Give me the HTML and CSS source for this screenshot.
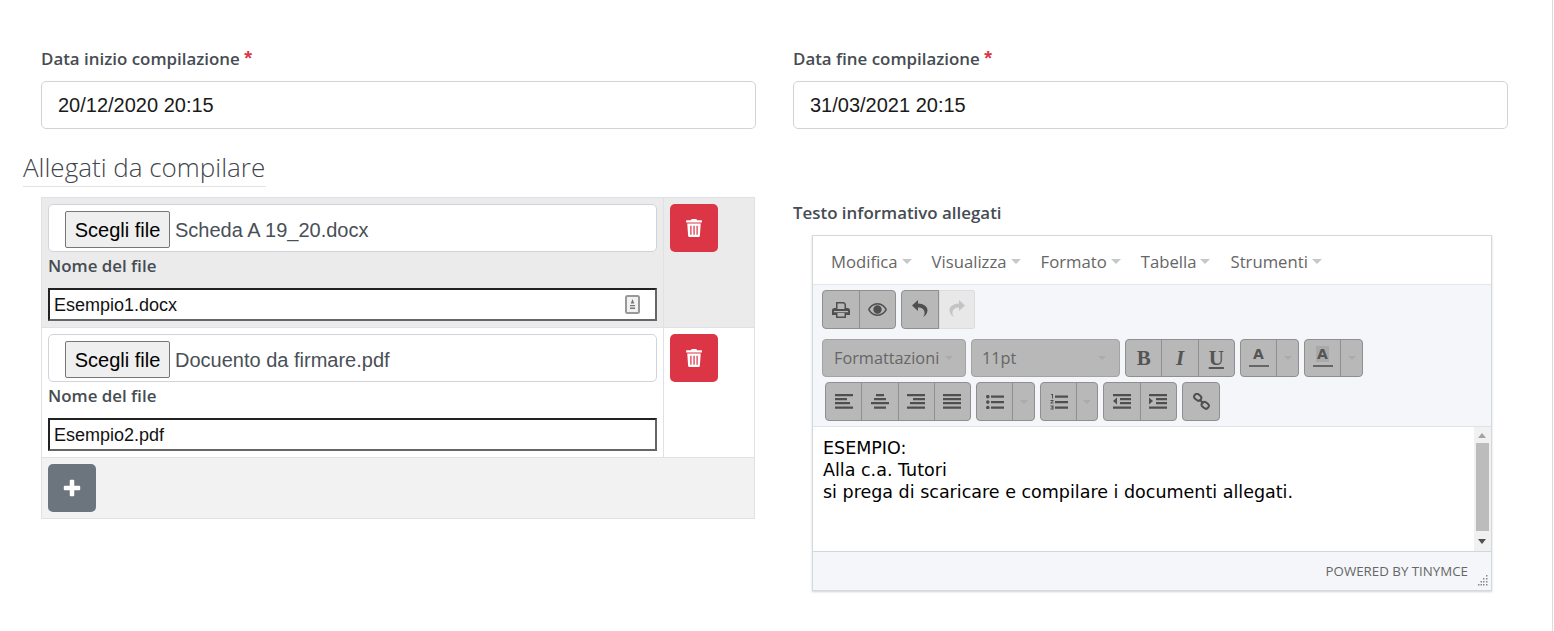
FILE: index.html
```html
<!DOCTYPE html>
<html lang="it">
<head>
<meta charset="utf-8">
<title>Allegati da compilare</title>
<link rel="stylesheet" href="styles.css">
</head>
<body>
<svg class="defs" width="0" height="0" aria-hidden="true">
  <symbol id="i-trash" viewBox="0 0 14 16"><path fill="currentColor" d="M5 0h4l.8 1.200H14V3H0V1.200h4.200zM1 4h12l-.8 11a1.200 1.200 0 0 1-1.200 1H3a1.200 1.200 0 0 1-1.200-1zm2.700 2v8h1.100V6zm2.800 0v8h1.100V6zm2.700 0v8h1.100V6z"/></symbol>
  <symbol id="i-caret" viewBox="0 0 10 5"><path fill="currentColor" d="M0 0h10L5 5z"/></symbol>
</svg>
<main class="page">
  <div class="grid">
    <div class="field">
      <label class="lbl">Data inizio compilazione <span class="req">*</span></label>
      <div class="date">20/12/2020 20:15</div>
    </div>
    <div class="field">
      <label class="lbl">Data fine compilazione <span class="req">*</span></label>
      <div class="date">31/03/2021 20:15</div>
    </div>
    <section class="left">
      <h2 class="heading">Allegati da compilare</h2>
      <div class="table">
        <div class="row row-a">
          <div class="cell-main">
            <div class="file"><button class="choose">Scegli file</button><span class="fname">Scheda A 19_20.docx</span></div>
            <div class="lbl lbl-name">Nome del file</div>
            <div class="name-input"><span>Esempio1.docx</span>
              <svg class="contact" width="15" height="19" viewBox="0 0 15 19"><rect x="1" y="1" width="13" height="17" rx="1.500" fill="#f2f2f2" stroke="#999" stroke-width="2"/><path d="M7.500 4l1.800 4.500H5.700zM5 10h5v1.200H5zM5 12.500h5v1.500H5z" fill="#777"/></svg>
            </div>
          </div>
          <div class="cell-act"><button class="btn-del"><svg width="16" height="18"><use href="#i-trash"/></svg></button></div>
        </div>
        <div class="row row-b">
          <div class="cell-main">
            <div class="file"><button class="choose">Scegli file</button><span class="fname">Docuento da firmare.pdf</span></div>
            <div class="lbl lbl-name">Nome del file</div>
            <div class="name-input"><span>Esempio2.pdf</span></div>
          </div>
          <div class="cell-act"><button class="btn-del"><svg width="16" height="18"><use href="#i-trash"/></svg></button></div>
        </div>
        <div class="row-add">
          <button class="btn-add"><svg width="18" height="18" viewBox="0 0 16 16"><path fill="#fff" d="M6 1.500a.8.8 0 0 1 .8-.8h2.400a.8.8 0 0 1 .8.8V6h4.500a.8.8 0 0 1 .8.8v2.400a.8.8 0 0 1-.8.8H10v4.500a.8.8 0 0 1-.8.8H6.800a.8.8 0 0 1-.8-.8V10H1.500a.8.8 0 0 1-.8-.8V6.800a.8.8 0 0 1 .8-.8H6z"/></svg></button>
        </div>
      </div>
    </section>
    <section class="right">
      <div class="lbl">Testo informativo allegati</div>
      <div class="editor">
        <nav class="menubar">
          <span class="menu">Modifica<svg class="caret" width="10" height="5"><use href="#i-caret"/></svg></span>
          <span class="menu">Visualizza<svg class="caret" width="10" height="5"><use href="#i-caret"/></svg></span>
          <span class="menu">Formato<svg class="caret" width="10" height="5"><use href="#i-caret"/></svg></span>
          <span class="menu">Tabella<svg class="caret" width="10" height="5"><use href="#i-caret"/></svg></span>
          <span class="menu">Strumenti<svg class="caret" width="10" height="5"><use href="#i-caret"/></svg></span>
        </nav>
        <div class="toolbar">
          <div class="tb-row tb-row1">
            <div class="tgroup w74">
              <span class="tb"><svg width="18" height="16" viewBox="0 0 18 16"><path fill="#4f4f4f" d="M4 0h8l2 2v4h1.500A2.500 2.500 0 0 1 18 8.500V13h-4v3H4v-3H0V8.500A2.500 2.500 0 0 1 2.500 6H4zm1.500 1.500V7h7V2.600l-1-1.100zM5.500 11v3.500h7V11zM2 9v1.200h14V9z"/></svg></span>
              <span class="tb"><svg width="19" height="13" viewBox="0 0 19 13"><path fill="#4f4f4f" d="M9.500 0C14 0 17.500 3 19 6.500 17.500 10 14 13 9.500 13S1.500 10 0 6.500C1.500 3 5 0 9.500 0zm0 1.500C6 1.500 3.200 3.700 1.700 6.500 3.200 9.300 6 11.500 9.500 11.500s6.300-2.200 7.800-5C15.800 3.700 13 1.500 9.500 1.500zm0 .8a4.200 4.200 0 1 1 0 8.400 4.200 4.200 0 0 1 0-8.400z"/></svg></span>
            </div>
            <div class="tgroup w74">
              <span class="tb"><svg class="undo" width="16" height="17" viewBox="0 0 16 17"><path fill="#4f4f4f" d="M6 0L0 5.500 6 11V7.500c4 0 6 2 6.500 4.500.3 2-.5 4-1.500 5 3-1.500 4.500-4.500 4.500-7C15.500 6.500 11.500 3.500 6 3.500z"/></svg></span>
              <span class="tb tb-off"><svg class="undo" width="16" height="17" viewBox="0 0 16 17"><path fill="#c4c4c4" d="M10 0l6 5.500L10 11V7.500c-4 0-6 2-6.500 4.500-.3 2 .5 4 1.500 5C2 15.500.5 12.500.5 10 .5 6.500 4.500 3.500 10 3.500z"/></svg></span>
            </div>
          </div>
          <div class="tb-row tb-row2">
            <span class="select sel-a">Formattazioni<svg class="scaret" width="8" height="4"><use href="#i-caret"/></svg></span>
            <span class="select sel-b">11pt<svg class="scaret" width="8" height="4"><use href="#i-caret"/></svg></span>
            <div class="tgroup w110">
              <span class="tb tb-txt tb-b">B</span><span class="tb tb-txt tb-i">I</span><span class="tb tb-txt tb-u">U</span>
            </div>
            <div class="tgroup w59">
              <span class="tb tb-color"><span class="color-a">A</span></span><span class="tb tb-drop"><svg class="scaret" width="8" height="4"><use href="#i-caret"/></svg></span>
            </div>
            <div class="tgroup w59">
              <span class="tb tb-color"><span class="color-a color-hl">A</span></span><span class="tb tb-drop"><svg class="scaret" width="8" height="4"><use href="#i-caret"/></svg></span>
            </div>
          </div>
          <div class="tb-row tb-row3">
            <div class="tgroup w146">
              <span class="tb"><svg width="18" height="15" viewBox="0 0 18 15"><path fill="#4f4f4f" d="M0 0h18v2.300H0zM0 4h12v2.300H0zM0 8h15v2.300H0zM0 12.500h18v2.300H0z"/></svg></span>
              <span class="tb"><svg width="18" height="15" viewBox="0 0 18 15"><path fill="#4f4f4f" d="M5 0h8v2.300H5zM3 4h12v2.300H3zM0 8h18v2.300H0zM3 12.500h12v2.300H3z"/></svg></span>
              <span class="tb"><svg width="18" height="15" viewBox="0 0 18 15"><path fill="#4f4f4f" d="M0 0h18v2.300H0zM6 4h12v2.300H6zM3 8h15v2.300H3zM0 12.500h18v2.300H0z"/></svg></span>
              <span class="tb"><svg width="18" height="15" viewBox="0 0 18 15"><path fill="#4f4f4f" d="M0 0h18v2.300H0zM0 4h18v2.300H0zM0 8h18v2.300H0zM0 12.500h18v2.300H0z"/></svg></span>
            </div>
            <div class="tgroup w59">
              <span class="tb tb-main"><svg width="18" height="14" viewBox="0 0 18 14"><path fill="#4f4f4f" d="M5 0.500h13v2.300H5zM5 6h13v2.300H5zM5 11.500h13v2.300H5z"/><circle cx="1.800" cy="1.700" r="1.800" fill="#4f4f4f"/><circle cx="1.800" cy="7.100" r="1.800" fill="#4f4f4f"/><circle cx="1.800" cy="12.500" r="1.800" fill="#4f4f4f"/></svg></span><span class="tb tb-drop"><svg class="scaret" width="8" height="4"><use href="#i-caret"/></svg></span>
            </div>
            <div class="tgroup w58">
              <span class="tb tb-main"><svg width="18" height="16" viewBox="0 0 18 16"><path fill="#4f4f4f" d="M5 1.500h13v2.300H5zM5 7h13v2.300H5zM5 12.500h13v2.300H5zM1 0h2v4.500H2V1H1zM.5 6h3v1l-2 1.500h2v1h-3V8.500l2-1.500h-2zM.5 11.500h3v4h-3v-1h2v-.5h-1v-.8h1v-.7h-2z"/></svg></span><span class="tb tb-drop"><svg class="scaret" width="8" height="4"><use href="#i-caret"/></svg></span>
            </div>
            <div class="tgroup w74">
              <span class="tb"><svg width="18" height="15" viewBox="0 0 18 15"><path fill="#4f4f4f" d="M0 0h18v2.300H0zM7 4h11v2.300H7zM7 8h11v2.300H7zM0 12.500h18v2.300H0zM4 3.500v7L0 7z"/></svg></span>
              <span class="tb"><svg width="18" height="15" viewBox="0 0 18 15"><path fill="#4f4f4f" d="M0 0h18v2.300H0zM7 4h11v2.300H7zM7 8h11v2.300H7zM0 12.500h18v2.300H0zM0 3.500v7L4 7z"/></svg></span>
            </div>
            <div class="tgroup w38">
              <span class="tb"><svg width="17" height="17" viewBox="0 0 17 17"><g fill="none" stroke="#4f4f4f" stroke-width="2"><rect x="1" y="1.500" width="7.500" height="5.500" rx="2.700" transform="rotate(40 4.700 4.200)"/><rect x="8.500" y="9.500" width="7.500" height="5.500" rx="2.700" transform="rotate(40 12.200 12.200)"/><path d="M6.500 6.500l4 4"/></g></svg></span>
            </div>
          </div>
        </div>
        <div class="content">
          <div class="text">ESEMPIO:<br>Alla c.a. Tutori<br>si prega di scaricare e compilare i documenti allegati.</div>
          <div class="scroll">
            <svg width="8" height="5" class="arr-up"><path d="M0 5h8L4 0z" fill="#a3a3a3"/></svg>
            <div class="thumb"></div>
            <svg width="8" height="5" class="arr-down"><path d="M0 0h8L4 5z" fill="#505050"/></svg>
          </div>
        </div>
        <div class="status">
          <span class="powered">POWERED BY TINYMCE</span>
          <svg class="grip" width="12" height="12" viewBox="0 0 12 12"><path fill="#888" d="M10 0h1.500v1.500H10zM7 3h1.500v1.500H7zM10 3h1.500v1.500H10zM4.500 6H6v1.500H4.500zM7 6h1.500v1.500H7zM10 6h1.500v1.500H10zM2 9h1.500v1.500H2zM4.500 9H6v1.500H4.500zM7 9h1.500v1.500H7zM10 9h1.500v1.500H10z"/></svg>
        </div>
      </div>
    </section>
  </div>
</main>
</body>
</html>
```
FILE: styles.css
```css
* { box-sizing: border-box; }
html, body { margin: 0; padding: 0; background: #fff; overflow: hidden; }
body { font-family: "Open Sans", sans-serif; color: #343a40; height: 631px; }
.defs { position: absolute; }
.page { width: 1553px; height: 631px; border-right: 1px solid #dcdcdc; padding: 48px 44px 0 41px; }
.grid { display: grid; grid-template-columns: 715px 715px; column-gap: 37px; }
.lbl { display: block; font-size: 16.900px; font-weight: 600; line-height: 22px; color: #454c53; white-space: nowrap; }
.req { color: #dc3545; font: 700 20px/18px "Liberation Sans", Arial, sans-serif; }
.field { height: 102px; }
.date { margin-top: 11px; height: 48px; border: 1px solid #ced4da; border-radius: 5px; padding: 0 16px; display: flex; align-items: center; font: 20px "Liberation Sans", Arial, sans-serif; color: #1a1a1a; }
.heading { margin: 0 0 10px -18px; width: 243px; height: 37px; font-size: 26px; font-weight: 300; line-height: 35px; color: #3f464d; border-bottom: 1px solid #e3e3e3; white-space: nowrap; }
.table { border: 1px solid #dee2e6; width: 714px; background: #f2f2f2; }
.row { display: flex; height: 130px; border-bottom: 1px solid #dee2e6; }
.row-a { background: #ebebeb; }
.row-b { background: #fff; }
.cell-main { width: 622px; padding: 6px 6px 0 6px; border-right: 1px solid #dee2e6; }
.cell-act { padding: 6px; }
.file { height: 48px; border: 1px solid #ced4da; border-radius: 5px; background: #fff; padding: 6px 0 0 16px; display: flex; align-items: flex-start; font: 20px "Liberation Sans", Arial, sans-serif; }
.choose { height: 37px; width: 105px; padding: 2px 0 0; border: 1px solid #767676; border-radius: 2px; background: #efefef; font: 20px "Liberation Sans", Arial, sans-serif; color: #000; }
.fname { margin-left: 5px; line-height: 39px; color: #495057; }
.lbl-name { margin-top: 3px; height: 33px; line-height: 22px; }
.name-input { height: 33px; border: 2px solid; border-color: #222 #666 #666 #222; background: #fff; display: flex; align-items: center; justify-content: space-between; padding: 2px 15px 0 4px; font: 18px "Liberation Sans", Arial, sans-serif; color: #111; }
.contact { margin-top: -2px; }
.btn-del { width: 48px; height: 48px; border: 0; border-radius: 5px; background: #dc3545; color: #fff; display: flex; align-items: center; justify-content: center; padding: 0; }
.row-add { padding: 6px; height: 60px; }
.btn-add { width: 48px; height: 48px; border: 0; border-radius: 5px; background: #6c757d; display: flex; align-items: center; justify-content: center; padding: 0; }
.right { padding-top: 52px; }
.editor { margin: 11px 0 0 19px; width: 680px; height: 356px; border: 1px solid #d3dadb; box-shadow: 0 1px 2px rgba(0,0,0,.18); background: #fff; display: flex; flex-direction: column; }
.menubar { height: 49px; flex: none; display: flex; align-items: center; padding: 2px 0 0 18px; gap: 20px; border-bottom: 1px solid #e2e6ea; font-size: 16.700px; color: #666; }
.menu { display: inline-flex; align-items: center; }
.caret { margin-left: 4px; color: #c4c8cc; }
.toolbar { height: 142px; flex: none; background: #f4f6fa; padding: 5px 0 0 9px; border-bottom: 1px solid #dfe3e6; }
.tb-row { display: flex; gap: 5px; }
.tb-row1 { height: 39px; }
.tb-row2 { height: 38px; margin-top: 10px; }
.tb-row3 { height: 39px; margin-top: 5px; padding-left: 3px; }
.tgroup { display: flex; border: 1px solid #8f8f8f; border-radius: 4px; background: #b8b8b8; }
.w38 { width: 38px; }
.w58 { width: 58px; }
.w59 { width: 59px; }
.w74 { width: 74px; }
.w110 { width: 110px; }
.w146 { width: 146px; }
.tb { flex: 1 1 0; display: flex; align-items: center; justify-content: center; border-right: 1px solid #8f8f8f; }
.tb:last-child { border-right: 0; }
.undo { margin-top: -3px; }
.tb-off { background: #e8e8e8; border-radius: 0 3px 3px 0; margin: -1px -1px -1px 0; box-shadow: inset 0 0 0 1px #dcdcdc; }
.tb-txt { font-family: "Liberation Serif", serif; font-size: 21px; color: #555; }
.tb-b { font-weight: 700; }
.tb-i { font-style: italic; font-weight: 700; }
.tb-u { text-decoration: underline; font-weight: 700; }
.tb-color, .tb-main { flex: none; width: 36px; }
.color-a { font: 700 14px/16px "DejaVu Sans", sans-serif; color: #555; border-bottom: 2px solid #666; padding: 0 0 3px; width: 20px; text-align: center; margin-top: -3px; }
.color-hl { background: linear-gradient(#a9a9a9, #a9a9a9) no-repeat center top / 13px 16px; }
.tb-drop { flex: 1 1 0; }
.scaret { color: #a6acb2; }
.select { border: 1px solid #a3a3a3; border-radius: 4px; background: #b8b8b8; display: flex; align-items: center; justify-content: space-between; font-size: 16.300px; color: #666; padding: 0 13px 0 11px; }
.sel-a { width: 144px; padding-right: 12px; }
.sel-b { width: 149px; padding-left: 10px; }
.content { height: 125px; flex: none; display: flex; border-bottom: 1px solid #cfd8dd; }
.text { flex: 1; padding: 10px 0 0 10px; font: 17.500px/22px "DejaVu Sans", Verdana, sans-serif; color: #000; white-space: nowrap; }
.scroll { width: 17px; background: #f1f1f1; display: flex; flex-direction: column; align-items: center; padding: 0 2px 0 1px; }
.arr-up { margin: 6px 0 5px; flex: none; }
.thumb { width: 13px; height: 88px; background: #bcbcbc; flex: none; }
.arr-down { margin-top: 8px; flex: none; }
.status { flex: 1; background: #f4f6fa; position: relative; display: flex; align-items: center; justify-content: flex-end; padding-right: 23px; }
.powered { font-size: 13.300px; color: #666; }
.grip { position: absolute; right: 3px; bottom: 3px; }
```
